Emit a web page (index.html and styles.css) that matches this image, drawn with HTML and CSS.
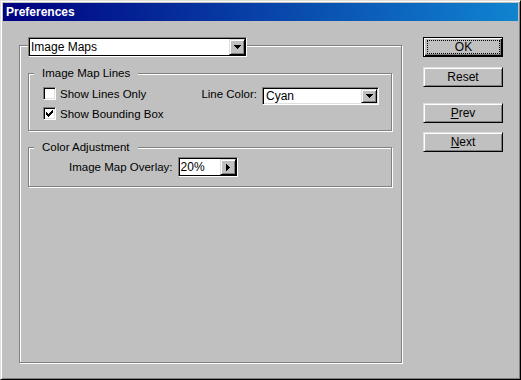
FILE: index.html
```html
<!DOCTYPE html>
<html lang="en">
<head>
    <meta charset="UTF-8">
    <meta name="viewport" content="width=device-width, initial-scale=1.0">
    <title>Preferences</title>
    <link rel="stylesheet" href="styles.css">
</head>
<body>
    <div class="Window">
        <div class="Title-Bar">Preferences</div>
        <div class="Client">
            <div class="Main-Group">
                <div class="Combo Combo-Page">
                    <span class="Combo-Text">Image Maps</span>
                    <span class="Arrow-Button">
                        <svg width="7" height="4" viewBox="0 0 7 4"><path d="M0 0h7v1H0zM1 1h5v1H1zM2 2h3v1H2zM3 3h1v1H3z"/></svg>
                    </span>
                </div>

                <div class="Group Group-Lines">
                    <div class="Group-Title">Image Map Lines</div>
                    <div class="Lines-Row">
                        <div class="Check-List">
                            <label class="Check">
                                <span class="Check-Box"></span>
                                <span>Show Lines Only</span>
                            </label>
                            <label class="Check">
                                <span class="Check-Box">
                                    <svg width="7" height="7" viewBox="0 0 7 7"><path d="M6 0h1v1H6zM5 1h2v1H5zM0 2h1v1H0zM4 2h3v1H4zM0 3h2v1H0zM3 3h3v1H3zM0 4h5v1H0zM1 5h3v1H1zM2 6h1v1H2z"/></svg>
                                </span>
                                <span>Show Bounding Box</span>
                            </label>
                        </div>
                        <div class="Field Field-Color">
                            <span class="Field-Label">Line Color:</span>
                            <div class="Combo Combo-Color">
                                <span class="Combo-Text">Cyan</span>
                                <span class="Arrow-Button">
                                    <svg width="7" height="4" viewBox="0 0 7 4"><path d="M0 0h7v1H0zM1 1h5v1H1zM2 2h3v1H2zM3 3h1v1H3z"/></svg>
                                </span>
                            </div>
                        </div>
                    </div>
                </div>

                <div class="Group Group-Color">
                    <div class="Group-Title">Color Adjustment</div>
                    <div class="Field Field-Overlay">
                        <span class="Field-Label">Image Map Overlay:</span>
                        <div class="Spinner">
                            <span class="Combo-Text">20%</span>
                            <span class="Arrow-Button">
                                <svg width="4" height="7" viewBox="0 0 4 7"><path d="M0 0h1v7H0zM1 1h1v5H1zM2 2h1v3H2zM3 3h1v1H3z"/></svg>
                            </span>
                        </div>
                    </div>
                </div>
            </div>

            <div class="Buttons">
                <div class="Push-Button Default-Button"><span class="Focus-Rect">OK</span></div>
                <div class="Push-Button Button-Reset">Reset</div>
                <div class="Push-Button Button-Prev"><span><u>P</u>rev</span></div>
                <div class="Push-Button Button-Next"><span><u>N</u>ext</span></div>
            </div>
        </div>
    </div>
</body>
</html>
```

FILE: styles.css
```css
body {
    margin: 0;
    font-family: "Liberation Sans", Arial, sans-serif;
    font-size: 11.5px;
    color: #000000;
    background-color: #c0c0c0;
}

.Window {
    width: 521px;
    height: 380px;
    box-sizing: border-box;
    padding: 2px;
    border: 1px solid;
    border-color: #dfdfdf #000000 #000000 #dfdfdf;
    box-shadow: inset 1px 1px 0 #ffffff, inset -1px -1px 0 #808080;
    background-color: #c0c0c0;
    display: flex;
    flex-direction: column;
}

.Title-Bar {
    height: 18px;
    line-height: 18px;
    padding-left: 3px;
    background: linear-gradient(to right, #000080, #1084d0);
    color: #ffffff;
    font-size: 12px;
    font-weight: bold;
}

.Client {
    flex: 1;
    display: flex;
    padding: 16px 15px 14px 16px;
}

/* etched frames */
.Main-Group,
.Group {
    border: 1px solid #808080;
    box-shadow: 1px 1px 0 #ffffff, inset 1px 1px 0 #ffffff;
}

.Main-Group {
    width: 383px;
    box-sizing: border-box;
    margin-top: 8px;
    padding: 0 9px 0 8px;
}

.Group {
    margin-top: 16px;
    padding: 0 12px 6px 5px;
}

.Group-Color {
    padding-bottom: 9px;
}

.Group-Title {
    display: table;
    margin-top: -8px;
    padding: 0 8px;
    line-height: 15px;
    background-color: #c0c0c0;
}

/* combo boxes */
.Combo,
.Spinner {
    display: flex;
    box-sizing: border-box;
    background-color: #ffffff;
    border: 1px solid;
    border-color: #808080 #ffffff #ffffff #808080;
    box-shadow: inset 1px 1px 0 #000000, inset -1px -1px 0 #dfdfdf;
    padding: 1px;
}

.Combo-Page {
    width: 219px;
    height: 20px;
    margin-top: -9px;
    box-shadow: inset 1px 1px 0 #000000, inset -1px -1px 0 #000000;
}

.Combo-Color {
    width: 117px;
    height: 18px;
    margin-top: 3px;
}

.Spinner {
    width: 60px;
    height: 20px;
    box-shadow: inset 1px 1px 0 #000000, inset -1px -1px 0 #000000;
}

.Combo-Text {
    flex: 1;
    padding-left: 1px;
    display: flex;
    align-items: center;
    font-size: 12px;
}

.Combo-Color .Combo-Text {
    padding-left: 2px;
}

.Arrow-Button {
    width: 16px;
    box-sizing: border-box;
    display: flex;
    align-items: center;
    justify-content: center;
    background-color: #c0c0c0;
    border: 1px solid;
    border-color: #dfdfdf #000000 #000000 #dfdfdf;
    box-shadow: inset 1px 1px 0 #ffffff, inset -1px -1px 0 #808080;
}

.Arrow-Button svg {
    shape-rendering: crispEdges;
}

/* checkboxes */
.Lines-Row {
    display: flex;
    align-items: flex-start;
    margin-top: 3px;
}

.Check-List {
    padding-left: 9px;
}

.Check {
    height: 20px;
    line-height: 20px;
    display: flex;
    align-items: flex-start;
}

.Check-Box {
    width: 13px;
    height: 13px;
    box-sizing: border-box;
    margin: 3px 4px 0 0;
    background-color: #ffffff;
    border: 1px solid;
    border-color: #808080 #ffffff #ffffff #808080;
    box-shadow: inset 1px 1px 0 #000000, inset -1px -1px 0 #dfdfdf;
    display: flex;
    align-items: center;
    justify-content: center;
}

.Check-Box svg {
    shape-rendering: crispEdges;
}

/* labelled fields */
.Field {
    display: flex;
    align-items: flex-start;
}

.Field-Label {
    line-height: 20px;
    margin-right: 5px;
}

.Field-Color {
    margin-left: auto;
}

.Field-Overlay {
    margin: 2px 0 0 35px;
    align-items: center;
}

/* push buttons */
.Buttons {
    width: 80px;
    margin-left: auto;
    display: flex;
    flex-direction: column;
}

.Push-Button {
    height: 20px;
    box-sizing: border-box;
    display: flex;
    align-items: center;
    justify-content: center;
    border: 1px solid;
    border-color: #dfdfdf #000000 #000000 #dfdfdf;
    box-shadow: inset 1px 1px 0 #ffffff, inset -1px -1px 0 #808080;
    font-size: 12px;
}

.Default-Button {
    border-color: #000000;
    box-shadow: inset 1px 1px 0 #ffffff, inset -1px -1px 0 #000000, inset -2px -2px 0 #808080;
    align-items: stretch;
}

.Focus-Rect {
    flex: 1;
    margin: 2px 2px 2px 3px;
    border: 1px dotted #000000;
    display: flex;
    align-items: center;
    justify-content: center;
}

.Button-Reset {
    margin-top: 10px;
}

.Button-Prev {
    margin-top: 16px;
}

.Button-Next {
    margin-top: 9px;
}
```
